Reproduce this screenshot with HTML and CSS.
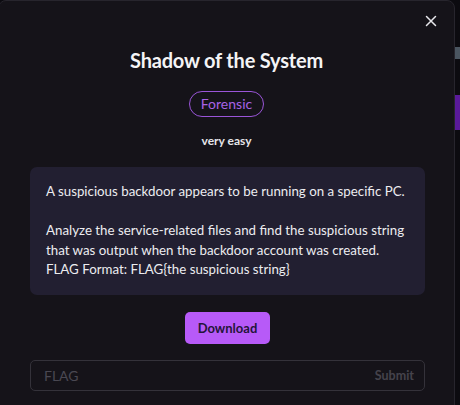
FILE: index.html
```html
<!DOCTYPE html>
<html>
<head>
<meta charset="utf-8">
<link rel="stylesheet" href="styles.css">
</head>
<body>
<div class="backdrop">
  <div class="modal">
    <button class="close" aria-label="Close">
      <svg width="12" height="12" viewBox="0 0 12 12"><path d="M1.5 1.5L10.5 10.5M10.5 1.5L1.5 10.5" stroke="#e8e8ec" stroke-width="1.5" stroke-linecap="round"/></svg>
    </button>
    <h1 class="title">Shadow of the System</h1>
    <span class="pill">Forensic</span>
    <div class="level">very easy</div>
    <div class="desc">
      <p>A suspicious backdoor appears to be running on a specific PC.</p>
      <p>Analyze the service-related files and find the suspicious string that was output when the backdoor account was created.<br>FLAG Format: FLAG{the suspicious string}</p>
    </div>
    <button class="download">Download</button>
    <div class="flagrow">
      <input class="flaginput" placeholder="FLAG">
      <button class="submit">Submit</button>
    </div>
  </div>
  <div class="side">
    <span class="side-a"></span>
    <span class="side-b"></span>
  </div>
</div>
</body>
</html>
```

FILE: styles.css
```css
html, body {
  margin: 0;
  padding: 0;
  background: #0c0b10;
  width: 460px;
  height: 405px;
  overflow: hidden;
  font-family: Lato, "Noto Sans", sans-serif;
}
.backdrop {
  display: flex;
  height: 405px;
}
.modal {
  position: relative;
  margin-left: -2px;
  width: 457px;
  height: 420px;
  flex: none;
  background: #151319;
  border: 1px solid #27252d;
  border-radius: 8px;
  box-sizing: border-box;
  display: flex;
  flex-direction: column;
  align-items: center;
  padding-top: 43px;
}
.close {
  position: absolute;
  top: 13px;
  right: 16px;
  background: none;
  border: 0;
  padding: 0;
  width: 14px;
  height: 14px;
  display: flex;
  align-items: center;
  justify-content: center;
}
.title {
  margin: 0;
  font-size: 20px;
  font-weight: 700;
  color: #f4f4f6;
  line-height: 32px;
  letter-spacing: -0.2px;
}
.pill {
  margin-top: 15px;
  height: 26px;
  box-sizing: border-box;
  padding: 0 11px;
  border: 1px solid #9a55d8;
  border-radius: 13px;
  color: #a863e6;
  font-size: 14px;
  line-height: 24px;
}
.level {
  margin-top: 17px;
  color: #e6e6ea;
  font-size: 12px;
  font-weight: 700;
  line-height: 14px;
}
.desc {
  margin-top: 19px;
  width: 395px;
  margin-left: 2px;
  box-sizing: border-box;
  background: #221f31;
  border-radius: 7px;
  padding: 15px 15px 15px 16px;
  color: #ececf0;
  font-size: 13.3px;
  line-height: 19.5px;
}
.desc p {
  margin: 0;
}
.desc p + p {
  margin-top: 19.5px;
}
.download {
  margin-top: 17px;
  margin-left: 2px;
  height: 32px;
  padding: 0 13px;
  background: #b75af8;
  border: 0;
  border-radius: 5px;
  color: #24153a;
  font-family: Lato, "Noto Sans", sans-serif;
  font-size: 13px;
  font-weight: 700;
}
.flagrow {
  margin-top: 16px;
  margin-left: 2px;
  width: 395px;
  height: 31px;
  box-sizing: border-box;
  border: 1px solid #34323a;
  border-radius: 5px;
  display: flex;
  align-items: center;
  padding: 0 10px 0 13px;
}
.flaginput {
  flex: 1;
  min-width: 0;
  background: transparent;
  border: 0;
  outline: 0;
  font-family: Lato, "Noto Sans", sans-serif;
  font-size: 14px;
  color: #e6e6ea;
  padding: 0;
}
.flaginput::placeholder {
  color: #4a4852;
}
.submit {
  background: none;
  border: 0;
  padding: 0;
  color: #45434c;
  font-family: Lato, "Noto Sans", sans-serif;
  font-size: 12.5px;
  font-weight: 700;
}
.side {
  flex: 1;
  display: flex;
  flex-direction: column;
}
.side-a {
  margin-top: 47px;
  height: 12px;
  background: #4a5560;
}
.side-b {
  margin-top: 36px;
  height: 35px;
  background: #5a1a9a;
}
```
